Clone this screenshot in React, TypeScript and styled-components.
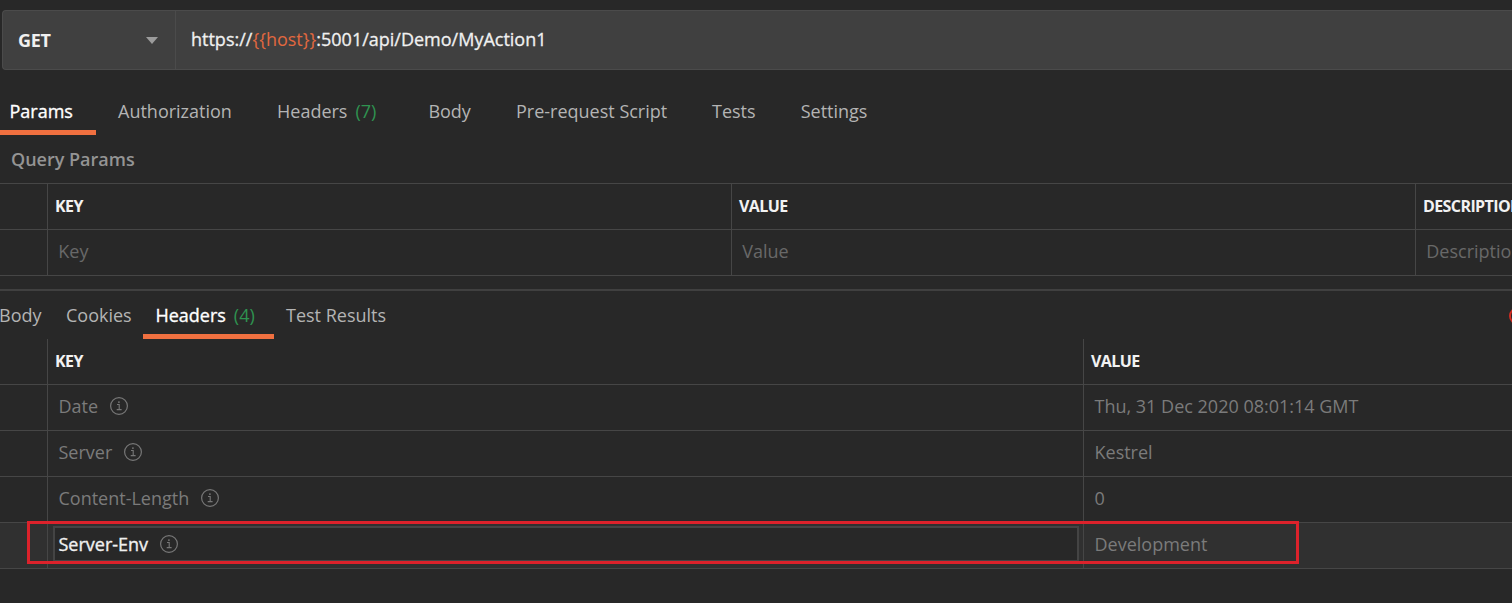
import React from "react";
import styled, { createGlobalStyle } from "styled-components";

const line = "#464646";

const GlobalStyle = createGlobalStyle`
  * { box-sizing: border-box; }
  body {
    margin: 0;
    background: #282828;
    overflow: hidden;
    font-family: "Open Sans", "Liberation Sans", sans-serif;
  }
`;

const Page = styled.main`
  width: 1512px;
  height: 603px;
  padding-top: 10px;
  background: #282828;
  overflow: hidden;
  font-size: 18px;
  line-height: 24px;
  white-space: nowrap;
`;

const RequestBar = styled.div`
  display: flex;
  height: 60px;
  margin-left: 2px;
  border: 1px solid #4b4b4b;
  border-right: 0;
  border-radius: 4px 0 0 4px;
  background: #404040;
`;

const MethodSelect = styled.button`
  display: flex;
  align-items: center;
  justify-content: space-between;
  width: 173px;
  padding: 0 17px 0 15px;
  border: 0;
  border-right: 1px solid #4b4b4b;
  background: none;
  color: #f0f0f0;
  font: 700 18px/24px "Open Sans", sans-serif;
  letter-spacing: -0.3px;
`;

const Caret = styled.span`
  border: 6px solid transparent;
  border-top: 7px solid #9c9c9c;
  border-bottom: 0;
`;

const Url = styled.div`
  padding: 16px 0 0 15px;
  color: #f0f0f0;
  -webkit-text-stroke: 0.3px;
  letter-spacing: 0;
`;

const Variable = styled.span`
  color: #e2683f;
  -webkit-text-stroke: 0;
`;

const RequestTabs = styled.nav`
  display: flex;
  height: 65px;
`;

const ResponseTabs = styled.nav`
  display: flex;
  height: 48px;
`;

const Tab = styled.div<{ $width: number; $indent?: number; $top: number; $active?: boolean }>`
  flex: none;
  width: ${(p) => p.$width}px;
  padding: ${(p) => p.$top}px 0 0;
  text-indent: ${(p) => p.$indent ?? 0}px;
  color: ${(p) => (p.$active ? "#ffffff" : "#b4b4b4")};
  -webkit-text-stroke: ${(p) => (p.$active ? "0.35px" : "0")};
  border-bottom: 5px solid ${(p) => (p.$active ? "#f07040" : "transparent")};
`;

const Count = styled.span`
  margin-left: 8px;
  color: #2f9350;
  -webkit-text-stroke: 0;
`;

const SectionTitle = styled.h2`
  height: 48px;
  margin: 0;
  padding: 12px 0 0 11px;
  color: #949494;
  font-size: 18px;
  line-height: 24px;
  font-weight: 600;
`;

const Table = styled.div<{ $topLine?: boolean }>`
  border-top: ${(p) => (p.$topLine ? `1px solid ${line}` : "0")};
`;

const Row = styled.div<{ $columns: string; $hover?: boolean }>`
  display: grid;
  grid-template-columns: ${(p) => p.$columns};
  height: 46px;
  border-bottom: 1px solid ${line};
  background: ${(p) => (p.$hover ? "#303030" : "transparent")};
`;

const Cell = styled.div`
  display: flex;
  align-items: center;
  padding: 0 0 3px 10.5px;
  border-right: 1px solid ${line};
  overflow: hidden;
  color: #7b7b7b;

  &:last-child { border-right: 0; }
`;

const Placeholder = styled(Cell)`
  padding-left: 10.3px;
  color: #686868;
`;

const HeadCell = styled(Cell)`
  padding: 0 0 1px 7px;
  color: #f2f2f2;
  font-size: 16px;
  font-weight: 700;
  letter-spacing: -0.6px;
`;

const EditCell = styled(Cell)`
  padding: 3px 4px 6px 5px;
`;

const Field = styled.div`
  display: flex;
  align-items: center;
  width: 100%;
  height: 36px;
  padding: 0 0 1px 3.5px;
  border: 2px solid #444444;
  background: #282828;
  color: #f0f0f0;
  -webkit-text-stroke: 0.35px;
`;

const InfoSvg = styled.svg`
  flex: none;
  width: 18px;
  height: 18px;
  margin-left: 12px;
  color: #777777;
`;

const Splitter = styled.div`
  height: 2px;
  margin-top: 13px;
  background: #404040;
`;

const NetworkStatus = styled.div`
  flex: none;
  width: 18px;
  height: 18px;
  margin: 16px -15px 0 auto;
  border: 2px solid #d52c22;
  border-radius: 50%;
`;

const ResponseHeaders = styled.section`
  position: relative;
`;

const Highlight = styled.div`
  position: absolute;
  left: 27px;
  top: 182px;
  width: 1272px;
  height: 43px;
  border: 3px solid #dc222b;
`;

const InfoIcon = () => (
  <InfoSvg viewBox="0 0 18 18" fill="none" stroke="currentColor">
    <circle cx="9" cy="9" r="8.4" strokeWidth="1.2" />
    <path d="M7 7.5h2.2v5M6.7 12.6h4.9" strokeWidth="1.1" />
    <rect x="8.1" y="4.4" width="1.6" height="1.5" fill="currentColor" stroke="none" />
  </InfoSvg>
);

const paramColumns = "48px 684px 684px 1fr";
const headerColumns = "48px 1036px 1fr";

const responseHeaders = [
  { name: "Date", value: "Thu, 31 Dec 2020 08:01:14 GMT" },
  { name: "Server", value: "Kestrel" },
  { name: "Content-Length", value: "0" },
];

export default function App() {
  return (
    <>
      <GlobalStyle />
      <Page>
        <RequestBar>
          <MethodSelect>
            GET
            <Caret />
          </MethodSelect>
          <Url>
            https://<Variable>{"{{host}}"}</Variable>:5001/api/Demo/MyAction1
          </Url>
        </RequestBar>
        <RequestTabs>
          <Tab $width={96} $indent={9.5} $top={29} $active>Params</Tab>
          <Tab $width={181} $indent={22} $top={29}>Authorization</Tab>
          <Tab $width={151} $top={29}>Headers<Count>(7)</Count></Tab>
          <Tab $width={88} $indent={0.4} $top={29}>Body</Tab>
          <Tab $width={196} $top={29}>Pre-request Script</Tab>
          <Tab $width={88} $top={29}>Tests</Tab>
          <Tab $width={90} $indent={0.7} $top={29}>Settings</Tab>
        </RequestTabs>
        <SectionTitle>Query Params</SectionTitle>
        <Table $topLine>
          <Row $columns={paramColumns}>
            <HeadCell />
            <HeadCell>KEY</HeadCell>
            <HeadCell>VALUE</HeadCell>
            <HeadCell>DESCRIPTION</HeadCell>
          </Row>
          <Row $columns={paramColumns}>
            <Placeholder />
            <Placeholder>Key</Placeholder>
            <Placeholder>Value</Placeholder>
            <Placeholder>Description</Placeholder>
          </Row>
        </Table>
        <Splitter />
        <ResponseTabs>
          <Tab $width={66} $indent={-1} $top={12}>Body</Tab>
          <Tab $width={77} $top={12}>Cookies</Tab>
          <Tab $width={131} $indent={12.4} $top={12} $active>Headers<Count>(4)</Count></Tab>
          <Tab $width={120} $indent={12} $top={12}>Test Results</Tab>
          <NetworkStatus />
        </ResponseTabs>
        <ResponseHeaders>
          <Table>
            <Row $columns={headerColumns}>
              <HeadCell />
              <HeadCell>KEY</HeadCell>
              <HeadCell>VALUE</HeadCell>
            </Row>
            {responseHeaders.map((h) => (
              <Row key={h.name} $columns={headerColumns}>
                <Cell />
                <Cell>{h.name}<InfoIcon /></Cell>
                <Cell>{h.value}</Cell>
              </Row>
            ))}
            <Row $columns={headerColumns} $hover>
              <Cell />
              <EditCell>
                <Field>Server-Env<InfoIcon /></Field>
              </EditCell>
              <Cell>Development</Cell>
            </Row>
          </Table>
          <Highlight />
        </ResponseHeaders>
      </Page>
    </>
  );
}
